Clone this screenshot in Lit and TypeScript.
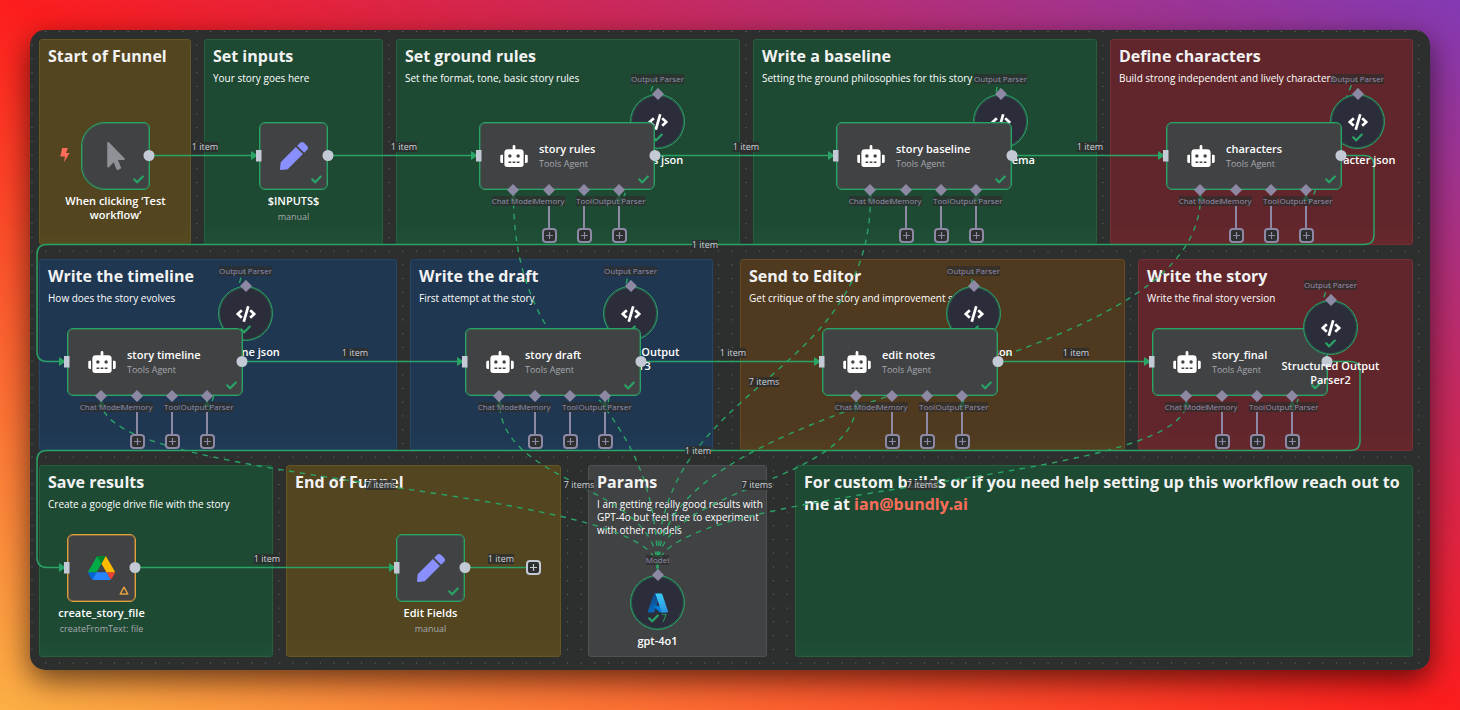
import { LitElement, html, svg, css, nothing, TemplateResult } from "lit";
import { customElement } from "lit/decorators.js";

type Tone = "gold" | "green" | "red" | "blue" | "brown" | "gray";

interface Note {
  x: number;
  y: number;
  w: number;
  h: number;
  tone: Tone;
  title: string;
  text?: string;
  mail?: string;
}

interface Agent {
  x: number;
  y: number;
  name: string;
}

interface SubNode {
  x: number;
  y: number;
  name: string;
}

const NOTES: Note[] = [
  { x: 9, y: 9, w: 152, h: 206, tone: "gold", title: "Start of Funnel" },
  { x: 174, y: 9, w: 179, h: 206, tone: "green", title: "Set inputs", text: "Your story goes here" },
  { x: 366, y: 9, w: 344, h: 206, tone: "green", title: "Set ground rules", text: "Set the format, tone, basic story rules" },
  { x: 723, y: 9, w: 344, h: 206, tone: "green", title: "Write a baseline", text: "Setting the ground philosophies for this story" },
  { x: 1080, y: 9, w: 303, h: 206, tone: "red", title: "Define characters", text: "Build strong independent and lively characters" },
  { x: 9, y: 229, w: 358, h: 192, tone: "blue", title: "Write the timeline", text: "How does the story evolves" },
  { x: 380, y: 229, w: 303, h: 192, tone: "blue", title: "Write the draft", text: "First attempt at the story" },
  { x: 710, y: 229, w: 385, h: 192, tone: "brown", title: "Send to Editor", text: "Get critique of the story and improvement suggests" },
  { x: 1108, y: 229, w: 275, h: 192, tone: "red", title: "Write the story", text: "Write the final story version" },
  { x: 9, y: 435, w: 234, h: 192, tone: "green", title: "Save results", text: "Create a google drive file with the story" },
  { x: 256, y: 435, w: 275, h: 192, tone: "gold", title: "End of Funnel" },
  { x: 558, y: 435, w: 179, h: 192, tone: "gray", title: "Params", text: "I am getting really good results with GPT-4o but feel free to experiment with other models" },
  { x: 765, y: 435, w: 618, h: 192, tone: "green", title: "For custom builds or if you need help setting up this workflow reach out to me at ", mail: "ian@bundly.ai" },
];

const AGENTS: Agent[] = [
  { x: 449, y: 92, name: "story rules" },
  { x: 806, y: 92, name: "story baseline" },
  { x: 1136, y: 92, name: "characters" },
  { x: 37, y: 298, name: "story timeline" },
  { x: 435, y: 298, name: "story draft" },
  { x: 792, y: 298, name: "edit notes" },
  { x: 1122, y: 298, name: "story_final" },
];

/* x and y are the centre of each round node; entry i feeds AGENTS[i] */
const PARSERS: SubNode[] = [
  { x: 627, y: 91, name: "rules json" },
  { x: 970, y: 91, name: "base schema" },
  { x: 1327, y: 91, name: "character json" },
  { x: 215, y: 283, name: "timeline json" },
  { x: 600, y: 283, name: "Structured Output Parser3" },
  { x: 943, y: 283, name: "edit notes json" },
  { x: 1300, y: 297, name: "Structured Output Parser2" },
];

const MODEL: SubNode = { x: 627, y: 572, name: "gpt-4o1" };

/* right to left, so that a label is never cut off by its right-hand neighbour */
const AGENT_PORTS = [
  { label: "Output Parser", dx: 140, add: true },
  { label: "Tool", dx: 105, add: true },
  { label: "Memory", dx: 70, add: true },
  { label: "Chat Model", dx: 34, add: false },
];

const MAIN_EDGES = [
  "M119 125.5H229",
  "M298 125.5H449",
  "M625 125.5H806",
  "M982 125.5H1136",
  "M1311 125.5H1334Q1344 125.5 1344 135.5V205Q1344 214.5 1334 214.5H17Q7 214.5 7 224.5V321.5Q7 331.5 17 331.5H37",
  "M212 331.5H435",
  "M611 331.5H792",
  "M968 331.5H1122",
  "M1297 331.5H1320Q1330 331.5 1330 341.5V411Q1330 420.5 1320 420.5H17Q7 420.5 7 430.5V527.5Q7 537.5 17 537.5H37",
  "M105 537.5H367",
  "M435 537.5H496",
];

const INPUTS: [number, number][] = [
  [229, 125.5], [449, 125.5], [806, 125.5], [1136, 125.5],
  [37, 331.5], [435, 331.5], [792, 331.5], [1122, 331.5],
  [37, 537.5], [367, 537.5],
];

const OUTPUTS: [number, number][] = [
  [119, 125.5], [298, 125.5], [625, 125.5], [982, 125.5], [1311, 125.5],
  [212, 331.5], [611, 331.5], [968, 331.5], [1297, 331.5],
  [105, 537.5], [435, 537.5],
];

const LABELS: [number, number, string][] = [
  [175, 117, "1 item"], [374, 117, "1 item"], [716, 117, "1 item"], [1060, 117, "1 item"],
  [675, 215, "1 item"], [325, 323, "1 item"], [703, 323, "1 item"], [1046, 323, "1 item"],
  [668, 421, "1 item"], [237, 529, "1 item"], [471, 529, "1 item"],
  [734, 352, "7 items"], [351, 455, "7 items"], [549, 455, "7 items"],
  [727, 455, "7 items"], [892, 455, "7 items"],
];

const icon = (cls: string, box: string, d: string) =>
  html`<svg class=${cls} viewBox=${box} aria-hidden="true"><path d=${d} fill="currentColor" /></svg>`;

const ROBOT =
  "M32,224H64V416H32A31.96,31.96,0,0,1,0,384V256A31.96,31.96,0,0,1,32,224Zm512-48V448a64.06,64.06,0,0,1-64,64H160a64.06,64.06,0,0,1-64-64V176a79.97,79.97,0,0,1,80-80H288V32a32,32,0,0,1,64,0V96H464A79.97,79.97,0,0,1,544,176ZM264,256a40,40,0,1,0-40,40A40,40,0,0,0,264,256Zm-8,128H192v32h64Zm96,0H288v32h64ZM456,256a40,40,0,1,0-40,40A40,40,0,0,0,456,256Zm-8,128H384v32h64ZM640,256V384a31.96,31.96,0,0,1-32,32H576V224h32A31.96,31.96,0,0,1,640,256Z";
const CODE =
  "M278.9 511.5l-61-17.7c-6.4-1.8-10-8.5-8.2-14.9L346.2 8.7c1.8-6.4 8.5-10 14.9-8.2l61 17.7c6.4 1.8 10 8.5 8.2 14.9L293.8 503.3c-1.9 6.4-8.5 10.1-14.9 8.2zm-114-112.2l43.5-46.4c4.6-4.9 4.3-12.7-.8-17.2L117 256l90.6-79.7c5.1-4.5 5.5-12.3.8-17.2l-43.5-46.4c-4.5-4.8-12.1-5.1-17-.5L3.8 247.2c-5.1 4.7-5.1 12.8 0 17.5l144.1 135.1c4.9 4.6 12.5 4.4 17-.5zm327.2.6l144.1-135.1c5.1-4.7 5.1-12.8 0-17.5L492.1 112.1c-4.8-4.5-12.4-4.3-17 .5L431.6 159c-4.6 4.9-4.3 12.7.8 17.2L523 256l-90.6 79.7c-5.1 4.5-5.5 12.3-.8 17.2l43.5 46.4c4.5 4.9 12.1 5.1 17 .6z";
const POINTER =
  "M302.189 329.126H196.105l55.831 135.993c3.889 9.428-.555 19.999-9.444 23.999l-49.165 21.427c-9.165 4-19.443-.571-23.332-9.714l-53.053-129.136-86.664 89.138C18.729 472.71 0 463.554 0 447.977V18.299C0 1.899 19.921-6.096 30.277 5.443l284.412 292.542c11.472 11.179 3.007 31.141-12.5 31.141z";
const PEN =
  "M290.74 93.24l128.02 128.02-277.99 277.99-114.14 12.6C11.35 513.54-1.56 500.62.14 485.34l12.7-114.22 277.9-277.88zm207.2-19.06l-60.11-60.11c-18.75-18.75-49.16-18.75-67.91 0l-56.55 56.55 128.02 128.02 56.55-56.55c18.75-18.76 18.75-49.16 0-67.91z";
const CHECK =
  "M173.898 439.404l-166.4-166.4c-9.997-9.997-9.997-26.206 0-36.204l36.203-36.204c9.997-9.998 26.207-9.998 36.204 0L192 312.69 432.095 72.596c9.997-9.997 26.207-9.997 36.204 0l36.203 36.204c9.997 9.997 9.997 26.206 0 36.204l-294.4 294.401c-9.998 9.997-26.207 9.997-36.204-.001z";
const BOLT = "M2.2 0H7.8L6 5H9.6L3.8 14.4L5 8.4H0.4Z";

const check = () => icon("check", "0 0 512 512", CHECK);
const diamond = () => icon("diamond", "0 0 12 12", "M6 0L12 6L6 12L0 6Z");
const plus = () => html`<svg class="plus" viewBox="0 0 7 7" aria-hidden="true"><path d="M3.5 0V7M0 3.5H7" stroke="currentColor" stroke-width="1.2" /></svg>`;

const drive = () => html`<svg class="drive" viewBox="0 0 87.3 78" aria-hidden="true">
  <path d="m6.6 66.85 3.85 6.65c.8 1.4 1.95 2.5 3.3 3.3l13.75-23.8h-27.5c0 1.55.4 3.1 1.2 4.5z" fill="#0066da" />
  <path d="m43.65 25-13.75-23.8c-1.35.8-2.5 1.9-3.3 3.3l-25.4 44a9.06 9.06 0 0 0 -1.2 4.5h27.5z" fill="#00ac47" />
  <path d="m73.55 76.8c1.35-.8 2.5-1.9 3.3-3.3l1.6-2.75 7.65-13.25c.8-1.4 1.2-2.95 1.2-4.5h-27.502l5.852 11.5z" fill="#ea4335" />
  <path d="m43.65 25 13.75-23.8c-1.35-.8-2.9-1.2-4.5-1.2h-18.5c-1.6 0-3.15.45-4.5 1.2z" fill="#00832d" />
  <path d="m59.8 53h-32.3l-13.75 23.8c1.35.8 2.9 1.2 4.5 1.2h50.8c1.6 0 3.15-.45 4.5-1.2z" fill="#2684fc" />
  <path d="m73.4 26.5-12.7-22c-.8-1.4-1.95-2.5-3.3-3.3l-13.75 23.8 16.15 28h27.45c0-1.55-.4-3.1-1.2-4.5z" fill="#ffba00" />
</svg>`;

const azure = () => html`<svg class="azure" viewBox="0 0 96 96" aria-hidden="true">
  <defs>
    <linearGradient id="az1" x1="45" y1="13" x2="18" y2="92" gradientUnits="userSpaceOnUse"><stop stop-color="#114a8b" /><stop offset="1" stop-color="#0669bc" /></linearGradient>
    <linearGradient id="az2" x1="46" y1="10" x2="76" y2="89" gradientUnits="userSpaceOnUse"><stop stop-color="#3ccbf4" /><stop offset="1" stop-color="#2892df" /></linearGradient>
  </defs>
  <path fill="url(#az1)" d="M33.338 6.544h26.038l-27.03 80.087a4.152 4.152 0 0 1-3.933 2.824H8.149a4.145 4.145 0 0 1-3.928-5.47L29.404 9.368a4.152 4.152 0 0 1 3.934-2.825z" />
  <path fill="#0078d4" d="M71.175 60.261h-41.29a1.911 1.911 0 0 0-1.305 3.309l26.532 24.764a4.171 4.171 0 0 0 2.846 1.121h23.38z" />
  <path fill="url(#az2)" d="M66.595 9.364a4.145 4.145 0 0 0-3.928-2.82H33.648a4.146 4.146 0 0 1 3.928 2.82l25.184 74.62a4.146 4.146 0 0 1-3.928 5.472h29.02a4.146 4.146 0 0 0 3.927-5.472z" />
</svg>`;

@customElement("app-root")
export class AppRoot extends LitElement {
  static styles = css`
    :host {
      display: flex;
      box-sizing: border-box;
      min-height: 100vh;
      padding: 30px 30px 40px;
      font-family: "Open Sans", "Noto Sans", sans-serif;
      background: linear-gradient(to top right, #fcb045, #fd1d1d, #833ab4);
      --line: #2aa366;
      --line-soft: rgba(42, 163, 102, 0.4);
      --port: #8d89a5;
      --endpoint: #c3c9d5;
      --canvas: #2d2e2e;
      --node: #414244;
    }
    .canvas {
      flex: 1;
      position: relative;
      overflow: hidden;
      border-radius: 15px;
      background: var(--canvas);
    }
    .frame {
      flex: 1;
      display: flex;
      border-radius: 15px;
      box-shadow: 0 10px 30px rgba(0, 0, 0, 0.6);
    }
    .wires {
      position: absolute;
      inset: 0;
      width: 100%;
      height: 100%;
      pointer-events: none;
    }
    .main { fill: none; stroke: var(--line); stroke-width: 1.5; }
    .dashed { fill: none; stroke: var(--line); stroke-width: 1.4; stroke-dasharray: 5.5 5.5; }
    .arrow { fill: var(--line); }
    .endpoint { fill: var(--endpoint); }

    .note {
      position: absolute;
      box-sizing: border-box;
      padding: 5px 0 5px 8px;
      border: 1px solid;
      border-radius: 3px;
      color: #f2f2f2;
    }
    .gold { background: linear-gradient(#524520 90%, #564a21); border-color: #665622; }
    .green { background: linear-gradient(#1e4a33 90%, #1f4f36); border-color: #23603f; }
    .red { background: linear-gradient(#61262b 90%, #66282d); border-color: #762f35; }
    .blue { background: linear-gradient(#1f3750 90%, #203b58); border-color: #254668; }
    .brown { background: linear-gradient(#4f3a20 90%, #543e21); border-color: #664b23; }
    .gray { background: #414244; border-color: #505153; }
    .note-title {
      margin: 0;
      font-size: 16px;
      line-height: 22px;
      font-weight: 700;
    }
    .note-text {
      margin: 5px 0 0;
      font-size: 10px;
      line-height: 13px;
      color: #ffffff;
    }
    .mail { color: #ff6d5a; text-decoration: none; }

    .tag {
      position: absolute;
      display: flex;
      justify-content: center;
      align-items: center;
      width: 60px;
      height: 10px;
      margin: -5px 0 0 -30px;
      font-size: 9px;
      line-height: 10px;
      color: #cfd2d9;
    }
    .tag-text { background: rgba(45, 46, 46, 0.85); white-space: nowrap; }

    .node {
      position: absolute;
      box-sizing: border-box;
      display: flex;
      align-items: center;
      height: 68px;
      border: 1px solid var(--line);
      border-radius: 6px;
      background: var(--node);
      box-shadow: inset 0 0 0 1px var(--line-soft);
    }
    .agent { width: 176px; padding-left: 20px; gap: 11px; }
    .square { width: 69px; justify-content: center; }
    .trigger { border-radius: 24px 6px 6px 24px; }
    .warned { border-color: #e0a03c; box-shadow: inset 0 0 0 1px rgba(224, 160, 60, 0.4); }
    .agent-name {
      margin: 0 0 1px;
      font-size: 11px;
      line-height: 15px;
      font-weight: 600;
      color: #ffffff;
    }
    .agent-kind {
      margin: 0;
      font-size: 9px;
      line-height: 14px;
      color: #a5a8ae;
    }
    .caption {
      position: absolute;
      top: 100%;
      left: 50%;
      width: 120px;
      margin: 5px 0 0 -60px;
      text-align: center;
    }
    .caption-name {
      margin: 0;
      font-size: 11px;
      line-height: 14px;
      font-weight: 600;
      color: #ffffff;
    }
    .caption-sub {
      margin: 2px 0 0;
      font-size: 9px;
      line-height: 14px;
      color: #a5a8ae;
    }
    .check { width: 11px; height: 11px; color: var(--line); }
    .status {
      position: absolute;
      right: 5px;
      bottom: 4px;
      display: flex;
    }
    .warn { width: 10px; height: 9px; margin: 0 1px 2px 0; }
    .bolt {
      position: absolute;
      left: -22px;
      top: 25px;
      width: 10px;
      height: 15px;
      color: #ff6d5a;
    }
    .robot { width: 28px; height: 22px; color: #ffffff; }
    .pointer { width: 18px; height: 28px; color: #909196; }
    .pen { width: 28px; height: 28px; color: #8a8fff; }
    .drive { width: 27px; height: 24px; }
    .azure { width: 22px; height: 22px; }
    .code { width: 20px; height: 16px; color: #ffffff; }

    .port {
      position: absolute;
      top: 61px;
      width: 70px;
      margin-left: -36px;
      display: flex;
      flex-direction: column;
      align-items: center;
    }
    .diamond { width: 12px; height: 12px; color: var(--port); flex: none; }
    .port-label {
      font-size: 8px;
      line-height: 10px;
      color: #9490ad;
      background: rgba(45, 46, 46, 0.7);
      white-space: nowrap;
    }
    .stem { width: 2px; height: 22px; background: var(--port); }
    .add {
      box-sizing: border-box;
      width: 15px;
      height: 15px;
      padding: 0;
      display: flex;
      align-items: center;
      justify-content: center;
      border: 2px solid var(--port);
      border-radius: 4px;
      background: var(--canvas);
      color: var(--port);
    }
    .add-main {
      position: absolute;
      border-color: var(--endpoint);
      color: var(--endpoint);
    }
    .plus { width: 7px; height: 7px; }

    .round {
      position: absolute;
      box-sizing: border-box;
      width: 55px;
      height: 55px;
      margin: -27px 0 0 -27px;
      display: flex;
      align-items: center;
      justify-content: center;
      border: 1px solid var(--line);
      border-radius: 50%;
      background: #2c2d3b;
      box-shadow: inset 0 0 0 1px var(--line-soft);
    }
    .round-status {
      position: absolute;
      left: 0;
      right: 0;
      bottom: 5px;
      display: flex;
      justify-content: center;
      align-items: center;
      gap: 2px;
      font-size: 10px;
      line-height: 11px;
      color: var(--line);
    }
    .top-port {
      position: absolute;
      left: 50%;
      bottom: 48px;
      width: 70px;
      margin-left: -35px;
      display: flex;
      flex-direction: column;
      align-items: center;
      gap: 4px;
    }
  `;

  private at(x: number, y: number) {
    return `left:${x}px;top:${y}px`;
  }

  private note(n: Note) {
    return html`<section class="note ${n.tone}" style="left:${n.x}px;top:${n.y}px;width:${n.w}px;height:${n.h}px">
      <h2 class="note-title">${n.title}${n.mail ? html`<a class="mail" href="mailto:${n.mail}">${n.mail}</a>` : nothing}</h2>
      ${n.text ? html`<p class="note-text">${n.text}</p>` : nothing}
    </section>`;
  }

  private agent(a: Agent) {
    return html`<article class="node agent" style=${this.at(a.x, a.y)}>
      ${icon("robot", "0 0 640 512", ROBOT)}
      <div>
        <h3 class="agent-name">${a.name}</h3>
        <p class="agent-kind">Tools Agent</p>
      </div>
      <span class="status">${check()}</span>
      ${AGENT_PORTS.map(
        (p) => html`<div class="port" style="left:${p.dx}px">
          ${diamond()}
          <span class="port-label">${p.label}</span>
          ${p.add ? html`<span class="stem"></span><button class="add" aria-label="Add ${p.label}">${plus()}</button>` : nothing}
        </div>`
      )}
    </article>`;
  }

  private round(s: SubNode, port: string, glyph: TemplateResult, runs?: number) {
    return html`<article class="round" style=${this.at(s.x, s.y)}>
      ${glyph}
      <span class="round-status">${check()}${runs ?? nothing}</span>
      <div class="top-port"><span class="port-label">${port}</span>${diamond()}</div>
      <div class="caption"><h3 class="caption-name">${s.name}</h3></div>
    </article>`;
  }

  private parser(i: number) {
    return this.round(PARSERS[i], "Output Parser", icon("code", "0 0 640 512", CODE));
  }

  private square(x: number, y: number, cls: string, glyph: TemplateResult, status: TemplateResult, name: string, sub?: string) {
    return html`<article class="node square ${cls}" style=${this.at(x, y)}>
      ${glyph}
      <span class="status">${status}</span>
      <div class="caption">
        <h3 class="caption-name">${name}</h3>
        ${sub ? html`<p class="caption-sub">${sub}</p>` : nothing}
      </div>
    </article>`;
  }

  private modelWire(a: Agent) {
    const x = a.x + 34.5;
    const y = a.y + 74;
    const mid = (y + 538) / 2;
    return svg`<path class="dashed" d="M627.5 538C627.5 ${mid} ${x} ${mid} ${x} ${y}" />
      <path class="arrow" d="M${x - 4} ${y + 5}H${x + 4}L${x} ${y - 2}Z" />`;
  }

  private parserWire(a: Agent, p: SubNode) {
    const x = a.x + 140;
    const y = a.y + 74;
    const top = p.y - 33;
    const bend = 5 * Math.sqrt(y - top);
    return svg`<path class="dashed" d="M${p.x + 0.5} ${top + 6}V${top}C${p.x} ${top - bend} ${x} ${y + bend} ${x} ${y}" />
      <path class="arrow" d="M${x - 4} ${y + 5}H${x + 4}L${x} ${y - 2}Z" />`;
  }

  render() {
    const warn = html`<svg class="warn" viewBox="0 0 10 9" aria-hidden="true"><path d="M5 1.2L8.8 8H1.2Z" fill="none" stroke="#e0a03c" stroke-width="1.5" stroke-linejoin="round" /></svg>`;
    return html`<div class="frame"><main class="canvas">
      <svg class="wires" aria-hidden="true">
        <defs>
          <pattern id="dots" x="1.5" y="1" width="13.73" height="13.73" patternUnits="userSpaceOnUse">
            <rect width="1" height="1" fill="#6c6d6d" />
          </pattern>
        </defs>
        <rect width="100%" height="100%" fill="url(#dots)" />
      </svg>
      ${NOTES.map((n) => this.note(n))}
      <svg class="wires" aria-hidden="true">
        ${MAIN_EDGES.map((d) => svg`<path class="main" d=${d} />`)}
        ${AGENTS.map((a) => this.modelWire(a))}
        ${AGENTS.map((a, i) => this.parserWire(a, PARSERS[i]))}
        <path class="main" d="M627.5 533V542" stroke-width="2" />
        ${INPUTS.map(([x, y]) => svg`<path class="arrow" d="M${x - 8} ${y - 4.5}L${x - 1} ${y}L${x - 8} ${y + 4.5}Z" />`)}
      </svg>
      ${LABELS.map(([x, y, t]) => html`<span class="tag" style=${this.at(x, y)}><span class="tag-text">${t}</span></span>`)}
      ${this.square(51, 92, "trigger", html`${icon("bolt", "0 0 10 15", BOLT)}${icon("pointer", "0 0 320 512", POINTER)}`, check(), "When clicking ‘Test workflow’")}
      ${this.square(229, 92, "", icon("pen", "0 0 512 512", PEN), check(), "$INPUTS$", "manual")}
      ${this.square(37, 504, "warned", drive(), warn, "create_story_file", "createFromText: file")}
      ${this.square(366, 504, "", icon("pen", "0 0 512 512", PEN), check(), "Edit Fields", "manual")}
      <button class="add add-main" style=${this.at(496, 530)} aria-label="Add node">${plus()}</button>
      ${[0, 1, 2, 3, 4, 5].map((i) => this.parser(i))}
      ${this.round(MODEL, "Model", azure(), 7)}
      ${AGENTS.map((a) => this.agent(a))}
      <svg class="wires" aria-hidden="true">
        ${INPUTS.map(([x, y]) => svg`<rect class="endpoint" x=${x - 3} y=${y - 5.5} width="5.5" height="11.5" />`)}
        ${OUTPUTS.map(([x, y]) => svg`<circle class="endpoint" cx=${x} cy=${y} r="5.5" />`)}
      </svg>
      ${this.parser(6)}
    </main></div>`;
  }
}
